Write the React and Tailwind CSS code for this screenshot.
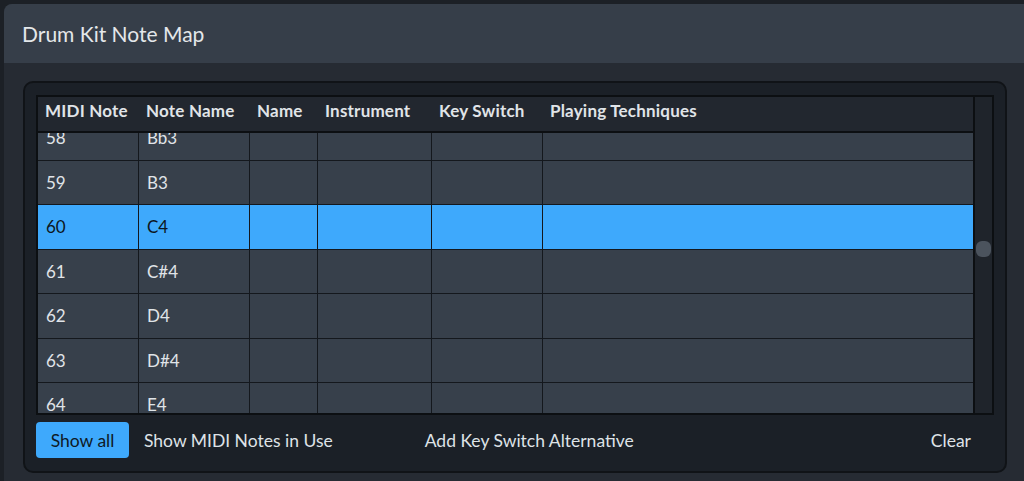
import React from "react";

const cols = [
  { w: "w-[101px]", label: "MIDI Note" },
  { w: "w-[111px]", label: "Note Name" },
  { w: "w-[68px]", label: "Name" },
  { w: "w-[114px]", label: "Instrument" },
  { w: "w-[111px]", label: "Key Switch" },
  { w: "flex-1", label: "Playing Techniques" },
];

const rows = [
  ["58", "Bb3"],
  ["59", "B3"],
  ["60", "C4"],
  ["61", "C#4"],
  ["62", "D4"],
  ["63", "D#4"],
  ["64", "E4"],
];

export default function App() {
  return (
    <div
      className="w-[1024px] h-[481px] bg-[#1c2026] pt-[4px] pl-[4px] overflow-hidden"
      style={{ fontFamily: "Lato, 'Noto Sans', sans-serif" }}
    >
      <div className="h-full bg-[#262b33] rounded-tl-[8px] flex flex-col overflow-hidden">
        <div className="h-[59px] shrink-0 bg-[#363e49] pl-[18px] flex items-center text-[21px] text-[#e4e7ea]">
          Drum Kit Note Map
        </div>
        <div className="pl-[19px] pt-[18px]">
          <div className="w-[984px] h-[392px] rounded-[10px] bg-[#1b2027] border-2 border-[#101317] pl-[11px] pt-[12px] flex flex-col">
            <div className="w-[958px] h-[320px] border-2 border-[#0c0f12] flex">
              <div className="w-[935px] flex flex-col">
                <div className="h-[36px] shrink-0 bg-[#22272f] border-b-2 border-[#0c0f12] flex">
                  {cols.map((c, i) => (
                    <div
                      key={i}
                      className={`${c.w} shrink-0 pl-[7px] pb-[6px] flex items-center text-[17px] font-bold tracking-[0.2px] text-[#e0e4e8]`}
                    >
                      {c.label}
                    </div>
                  ))}
                </div>
                <div className="flex-1 overflow-hidden bg-[#37404b]">
                  <div className="mt-[-17px]">
                    {rows.map((r, ri) => {
                      const sel = r[0] === "60";
                      return (
                        <div
                          key={ri}
                          className={`h-[44.5px] flex border-b border-[#14181d] ${
                            sel ? "bg-[#3ea9fc] text-[#0d1620]" : "bg-[#37404b] text-[#e0e4e8]"
                          }`}
                        >
                          {cols.map((c, ci) => (
                            <div
                              key={ci}
                              className={`${c.w} shrink-0 pl-[8px] flex items-center text-[17px] ${
                                ci < cols.length - 1 ? "border-r border-[#14181d]" : ""
                              }`}
                            >
                              {ci === 0 ? r[0] : ci === 1 ? r[1] : ""}
                            </div>
                          ))}
                        </div>
                      );
                    })}
                  </div>
                </div>
              </div>
              <div className="flex-1 bg-[#1f242b] border-l-2 border-[#0c0f12] pt-[144px] flex justify-center">
                <div className="w-[15px] h-[16px] rounded-[6px] bg-[#4b535d]" />
              </div>
            </div>
            <div className="flex items-center mt-[7px] text-[17.5px] text-[#dfe3e7]">
              <div className="w-[93px] h-[36px] rounded-[4px] bg-[#3ea9fc] text-[#0e1a26] flex items-center justify-center">
                <span className="mt-[3px]">Show all</span>
              </div>
              <div className="ml-[15px] mt-[3px]">Show MIDI Notes in Use</div>
              <div className="ml-[92px] mt-[3px]">Add Key Switch Alternative</div>
              <div className="ml-auto mr-[34px] mt-[3px]">Clear</div>
            </div>
          </div>
        </div>
      </div>
    </div>
  );
}
